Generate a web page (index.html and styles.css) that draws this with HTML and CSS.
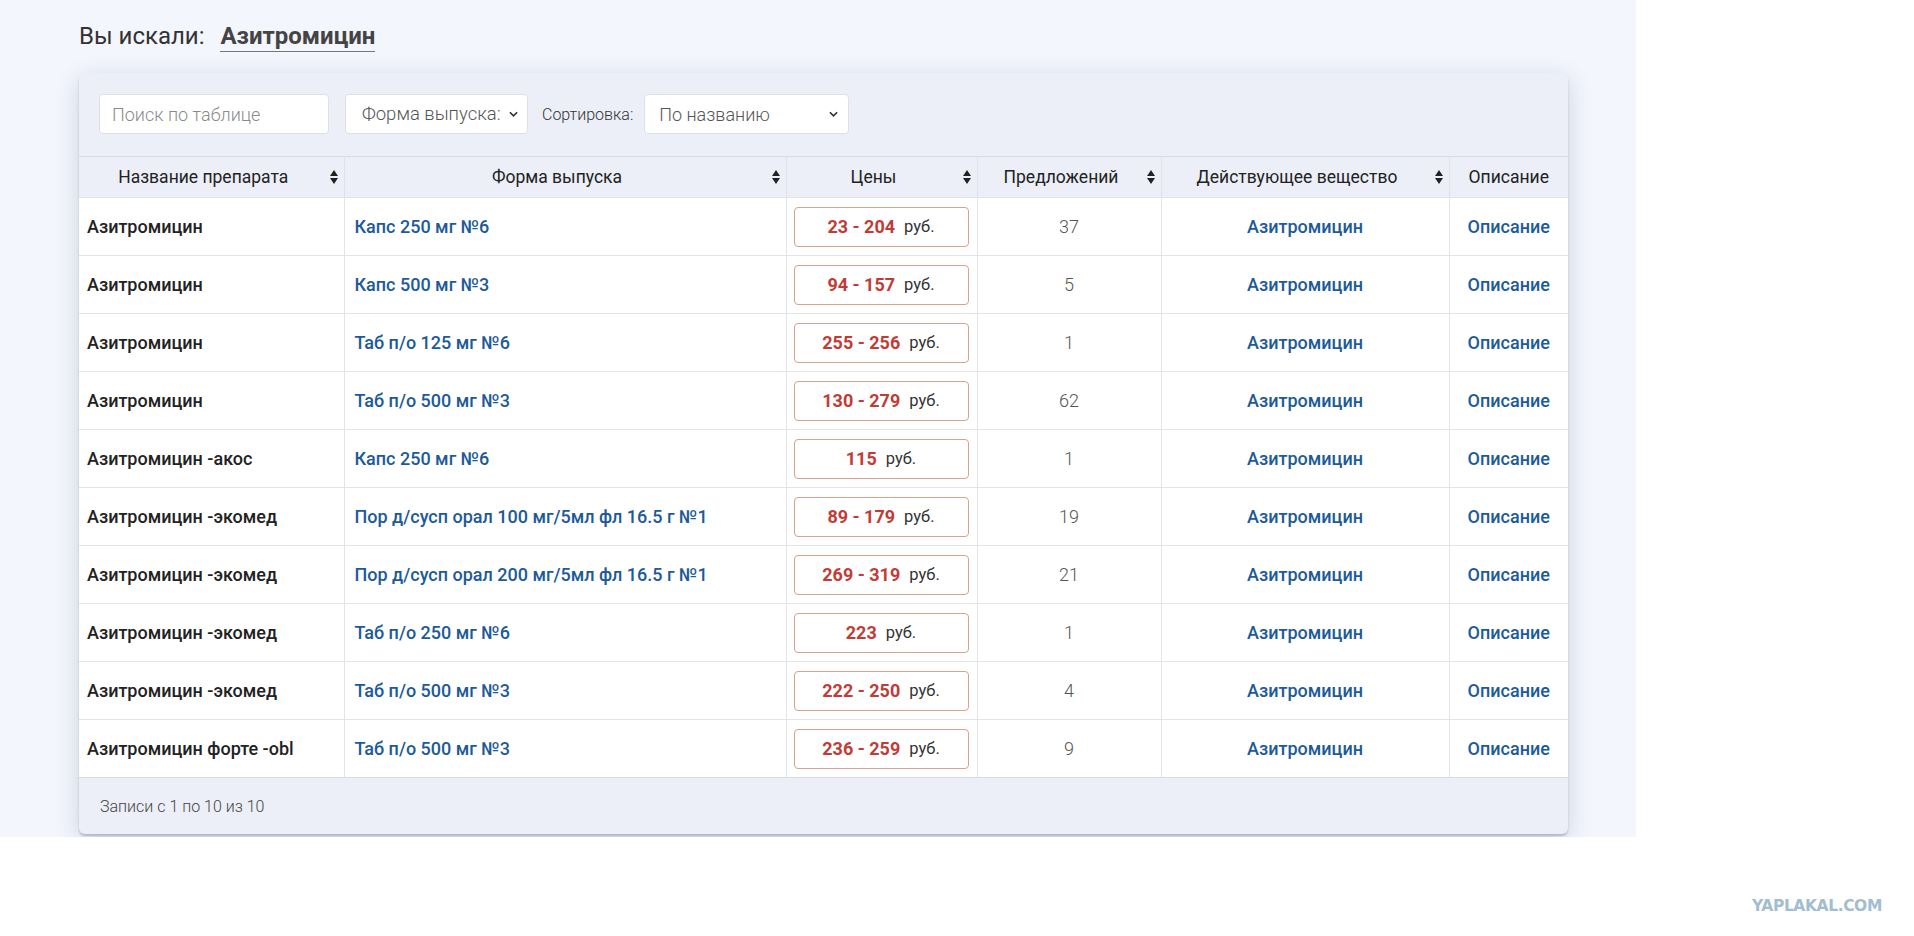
FILE: index.html
```html
<!DOCTYPE html>
<html lang="ru">
<head>
<meta charset="utf-8">
<title>Поиск</title>
<link rel="stylesheet" href="styles.css">
</head>
<body>
<div class="page">
  <h1 class="title">Вы искали: <span class="query">Азитромицин</span></h1>
  <div class="card">
    <div class="filters">
      <input class="search" type="text" placeholder="Поиск по таблице">
      <div class="select sel-form"><span>Форма выпуска:</span><svg class="chev" viewBox="0 0 10 6"><path d="M1 1l4 4 4-4" fill="none" stroke="#333" stroke-width="1.8"/></svg></div>
      <span class="sort-label">Сортировка:</span>
      <div class="select sel-sort"><span>По названию</span><svg class="chev" viewBox="0 0 10 6"><path d="M1 1l4 4 4-4" fill="none" stroke="#333" stroke-width="1.8"/></svg></div>
    </div>
    <table class="tbl">
      <colgroup>
        <col class="c1"><col class="c2"><col class="c3"><col class="c4"><col class="c5"><col class="c6">
      </colgroup>
      <thead>
        <tr>
          <th class="sortable">Название препарата<svg class="si" viewBox="0 0 8 14"><path d="M4 0L8 6H0z M4 14L0 8h8z" fill="#222"/></svg></th>
          <th class="sortable">Форма выпуска<svg class="si" viewBox="0 0 8 14"><path d="M4 0L8 6H0z M4 14L0 8h8z" fill="#222"/></svg></th>
          <th class="sortable">Цены<svg class="si" viewBox="0 0 8 14"><path d="M4 0L8 6H0z M4 14L0 8h8z" fill="#222"/></svg></th>
          <th class="sortable">Предложений<svg class="si" viewBox="0 0 8 14"><path d="M4 0L8 6H0z M4 14L0 8h8z" fill="#222"/></svg></th>
          <th class="sortable">Действующее вещество<svg class="si" viewBox="0 0 8 14"><path d="M4 0L8 6H0z M4 14L0 8h8z" fill="#222"/></svg></th>
          <th>Описание</th>
        </tr>
      </thead>
      <tbody>
        <tr><td class="name">Азитромицин</td><td class="form"><a>Капс 250 мг №6</a></td><td class="price"><div class="pbox"><b>23 - 204</b> руб.</div></td><td class="num">37</td><td class="ctr"><a>Азитромицин</a></td><td class="ctr"><a>Описание</a></td></tr>
        <tr><td class="name">Азитромицин</td><td class="form"><a>Капс 500 мг №3</a></td><td class="price"><div class="pbox"><b>94 - 157</b> руб.</div></td><td class="num">5</td><td class="ctr"><a>Азитромицин</a></td><td class="ctr"><a>Описание</a></td></tr>
        <tr><td class="name">Азитромицин</td><td class="form"><a>Таб п/о 125 мг №6</a></td><td class="price"><div class="pbox"><b>255 - 256</b> руб.</div></td><td class="num">1</td><td class="ctr"><a>Азитромицин</a></td><td class="ctr"><a>Описание</a></td></tr>
        <tr><td class="name">Азитромицин</td><td class="form"><a>Таб п/о 500 мг №3</a></td><td class="price"><div class="pbox"><b>130 - 279</b> руб.</div></td><td class="num">62</td><td class="ctr"><a>Азитромицин</a></td><td class="ctr"><a>Описание</a></td></tr>
        <tr><td class="name">Азитромицин -акос</td><td class="form"><a>Капс 250 мг №6</a></td><td class="price"><div class="pbox"><b>115</b> руб.</div></td><td class="num">1</td><td class="ctr"><a>Азитромицин</a></td><td class="ctr"><a>Описание</a></td></tr>
        <tr><td class="name">Азитромицин -экомед</td><td class="form"><a>Пор д/сусп орал 100 мг/5мл фл 16.5 г №1</a></td><td class="price"><div class="pbox"><b>89 - 179</b> руб.</div></td><td class="num">19</td><td class="ctr"><a>Азитромицин</a></td><td class="ctr"><a>Описание</a></td></tr>
        <tr><td class="name">Азитромицин -экомед</td><td class="form"><a>Пор д/сусп орал 200 мг/5мл фл 16.5 г №1</a></td><td class="price"><div class="pbox"><b>269 - 319</b> руб.</div></td><td class="num">21</td><td class="ctr"><a>Азитромицин</a></td><td class="ctr"><a>Описание</a></td></tr>
        <tr><td class="name">Азитромицин -экомед</td><td class="form"><a>Таб п/о 250 мг №6</a></td><td class="price"><div class="pbox"><b>223</b> руб.</div></td><td class="num">1</td><td class="ctr"><a>Азитромицин</a></td><td class="ctr"><a>Описание</a></td></tr>
        <tr><td class="name">Азитромицин -экомед</td><td class="form"><a>Таб п/о 500 мг №3</a></td><td class="price"><div class="pbox"><b>222 - 250</b> руб.</div></td><td class="num">4</td><td class="ctr"><a>Азитромицин</a></td><td class="ctr"><a>Описание</a></td></tr>
        <tr><td class="name">Азитромицин форте -obl</td><td class="form"><a>Таб п/о 500 мг №3</a></td><td class="price"><div class="pbox"><b>236 - 259</b> руб.</div></td><td class="num">9</td><td class="ctr"><a>Азитромицин</a></td><td class="ctr"><a>Описание</a></td></tr>
      </tbody>
    </table>
    <div class="footer">Записи с 1 по 10 из 10</div>
  </div>
</div>
<div class="watermark">YAPLAKAL.COM</div>
</body>
</html>
```

FILE: styles.css
```css
html, body {
  margin: 0;
  padding: 0;
  background: #ffffff;
  font-family: Roboto, "Noto Sans", sans-serif;
  color: #222;
}

.page {
  width: 1636px;
  height: 837px;
  box-sizing: border-box;
  padding: 0 0 0 79px;
  background: #f3f6fd;
  overflow: hidden;
}

.title {
  margin: 0;
  padding-top: 21px;
  height: 73px;
  box-sizing: border-box;
  font-size: 24px;
  line-height: 30px;
  font-weight: 400;
  color: #333;
}

.query {
  display: inline-block;
  margin-left: 10px;
  font-weight: 700;
  color: #444;
  line-height: 26px;
  padding-bottom: 2px;
  border-bottom: 1px solid #777;
}

.card {
  width: 1489px;
  background: #eceff8;
  border-radius: 6px;
  box-shadow: 0 2px 2px rgba(0, 0, 0, 0.18), 0 6px 24px rgba(40, 50, 80, 0.18);
  overflow: hidden;
}

.filters {
  display: flex;
  align-items: center;
  padding: 21px 20px 22px;
  gap: 13px;
}

.search {
  width: 230px;
  height: 40px;
  box-sizing: border-box;
  border: 1px solid #dde0e7;
  border-radius: 4px;
  background: #fff;
  padding: 0 12px;
  font-family: Roboto, sans-serif;
  font-size: 18px;
  font-weight: 300;
  color: #333;
  outline: none;
}
.search::placeholder { color: #8a8a8a; }

.select {
  height: 40px;
  box-sizing: border-box;
  border: 1px solid #dde0e7;
  border-radius: 4px;
  background: #fff;
  display: flex;
  align-items: center;
  justify-content: space-between;
  font-size: 18px;
  font-weight: 300;
  color: #555;
}
.sel-form { width: 183px; padding: 0 9px 0 16px; margin-left: 3px; font-size: 18.5px; }
.sel-sort { width: 205px; padding: 0 10px 0 14px; }
.chev { width: 9px; height: 6px; flex: none; }

.sort-label {
  font-size: 16px;
  font-weight: 300;
  color: #333;
  margin-left: 1px;
  margin-right: -2px;
}

.tbl {
  width: 100%;
  table-layout: fixed;
  border-collapse: collapse;
  font-size: 18px;
}
.c1 { width: 265px; }
.c2 { width: 442px; }
.c3 { width: 191px; }
.c4 { width: 184px; }
.c5 { width: 288px; }
.c6 { width: 119px; }

.tbl th {
  height: 41px;
  box-sizing: border-box;
  padding: 0 24px 0 8px;
  font-weight: 400;
  font-size: 17.5px;
  color: #222;
  text-align: center;
  border: 1px solid #dfe2e8;
  border-top-color: #d8dbe2;
  position: relative;
  background: #eceff8;
}
.tbl th:first-child { border-left: none; }
.tbl th:last-child { border-right: none; padding: 0 8px; }

.si {
  position: absolute;
  right: 6px;
  top: 13px;
  width: 8px;
  height: 14px;
}

.tbl td {
  height: 58px;
  box-sizing: border-box;
  background: #fff;
  border: 1px solid #e2e4e9;
  padding: 0 8px;
  vertical-align: middle;
}
.tbl td:first-child { border-left: none; }
.tbl td:last-child { border-right: none; }
.tbl tbody tr:last-child td { border-bottom: 1px solid #d8dbe2; }

.name { font-weight: 500; color: #222; }
.form { padding-left: 10px !important; }
.tbl a { color: #1d5a98; font-weight: 500; text-decoration: none; }

.price { padding: 0 8px 0 7px !important; }
.pbox {
  height: 40px;
  box-sizing: border-box;
  border: 1px solid #d8a28d;
  border-radius: 4px;
  display: flex;
  align-items: center;
  justify-content: center;
  font-size: 16.5px;
  font-weight: 400;
  color: #333;
  gap: 9px;
}
.pbox b {
  font-weight: 700;
  font-size: 18px;
  color: #c13c37;
}

.num { text-align: center; color: #555; font-weight: 300; }
.ctr { text-align: center; }

.footer {
  height: 56px;
  display: flex;
  align-items: center;
  padding-left: 21px;
  font-size: 16px;
  font-weight: 300;
  color: #444;
}

.watermark {
  position: absolute;
  left: 1752px;
  top: 897px;
  font-family: "DejaVu Sans", "Liberation Sans", sans-serif;
  font-weight: 700;
  font-size: 15.5px;
  letter-spacing: -0.4px;
  color: #a3bdd0;
}
```
